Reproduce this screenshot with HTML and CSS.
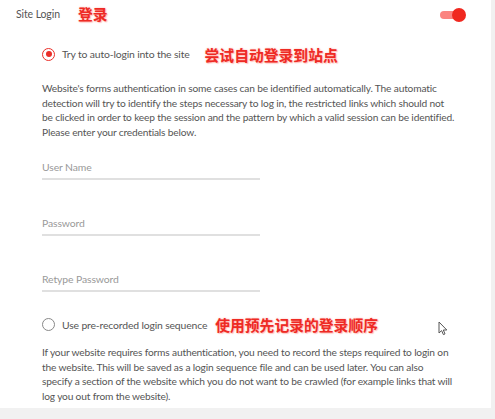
FILE: index.html
```html
<!DOCTYPE html>
<html>
<head>
<meta charset="utf-8">
<link rel="stylesheet" href="styles.css">
</head>
<body>
<div class="panel">
  <div class="header">
    <span class="title">Site Login</span>
    <span class="note note-title">登录</span>
    <span class="toggle"><span class="knob"></span></span>
  </div>
  <div class="section">
    <div class="option">
      <span class="radio checked"></span>
      <span class="label">Try to auto-login into the site</span>
      <span class="note note-opt1">尝试自动登录到站点</span>
    </div>
    <p class="desc desc1">Website's forms authentication in some cases can be identified automatically. The automatic detection will try to identify the steps necessary to log in, the restricted links which should not be clicked in order to keep the session and the pattern by which a valid session can be identified. Please enter your credentials below.</p>
    <div class="fields">
      <div class="field">User Name</div>
      <div class="field">Password</div>
      <div class="field">Retype Password</div>
    </div>
    <div class="option option2">
      <span class="radio"></span>
      <span class="label">Use pre-recorded login sequence</span>
      <span class="note note-opt2">使用预先记录的登录顺序</span>
    </div>
    <p class="desc desc2">If your website requires forms authentication, you need to record the steps required to login on the website. This will be saved as a login sequence file and can be used later. You can also specify a section of the website which you do not want to be crawled (for example links that will log you out from the website).</p>
  </div>
  <svg class="cursor" width="10" height="15" viewBox="0 0 10 15">
    <path d="M1 1 L1 12 L3.6 9.6 L5.4 13.6 L7 12.9 L5.3 9 L8.8 9 Z" fill="#fff" stroke="#555" stroke-width="1" stroke-linejoin="round"/>
  </svg>
</div>
</body>
</html>
```

FILE: styles.css
```css
html, body {
  margin: 0;
  padding: 0;
}
body {
  background: #f1f1f1;
  width: 495px;
  height: 419px;
  overflow: hidden;
  font-family: "Lato", "Noto Sans", sans-serif;
}
.panel {
  position: relative;
  width: 491px;
  height: 408px;
  background: #fff;
}
.header {
  display: flex;
  align-items: center;
  height: 28px;
  padding: 0 28px 0 16px;
}
.title {
  font-size: 10.5px;
  letter-spacing: -0.1px;
  color: #555;
}
.note {
  font-family: "Noto Sans CJK SC", sans-serif;
  font-weight: 700;
  font-size: 14.8px;
  color: #ee2a24;
  text-shadow: 0 0 2px #ffb3ad, 1px 1px 1px #ffc9c4;
}
.note-title {
  margin-left: 18px;
  margin-top: -1px;
}
.toggle {
  margin-left: auto;
  margin-top: 2px;
  position: relative;
  width: 23px;
  height: 8px;
  border-radius: 4px;
  background: #fb8480;
}
.knob {
  position: absolute;
  right: -3px;
  top: -3px;
  width: 14px;
  height: 14px;
  border-radius: 50%;
  background: #f0281f;
}
.section {
  padding-left: 42px;
}
.option {
  display: flex;
  align-items: center;
  height: 24px;
  margin-top: 14px;
}
.radio {
  box-sizing: border-box;
  width: 13px;
  height: 13px;
  border-radius: 50%;
  border: 1.5px solid #888;
  display: flex;
  align-items: center;
  justify-content: center;
}
.radio.checked {
  border-color: #ea2f29;
}
.radio.checked::after {
  content: "";
  width: 6px;
  height: 6px;
  border-radius: 50%;
  background: #ea2f29;
}
.label {
  margin-left: 7px;
  font-size: 10.4px;
  letter-spacing: -0.15px;
  color: #555;
}
.note-opt1 {
  margin-left: 15px;
}
.note-opt2 {
  margin-left: 8px;
}
.desc {
  margin: 0;
  width: 414px;
  font-size: 10.2px;
  letter-spacing: -0.17px;
  line-height: 14.7px;
  color: #555;
}
.desc1 {
  margin-top: 15px;
}
.fields {
  margin-top: 20px;
  display: flex;
  flex-direction: column;
  gap: 36px;
}
.field {
  width: 218px;
  height: 20px;
  border-bottom: 2px solid #e0e0e0;
  font-size: 10.4px;
  letter-spacing: -0.1px;
  color: #999;
  box-sizing: border-box;
  padding-top: 1px;
}
.option2 {
  margin-top: 21px;
}
.desc2 {
  margin-top: 8px;
  width: 411.5px;
}
.cursor {
  position: absolute;
  left: 438px;
  top: 321px;
}
```
